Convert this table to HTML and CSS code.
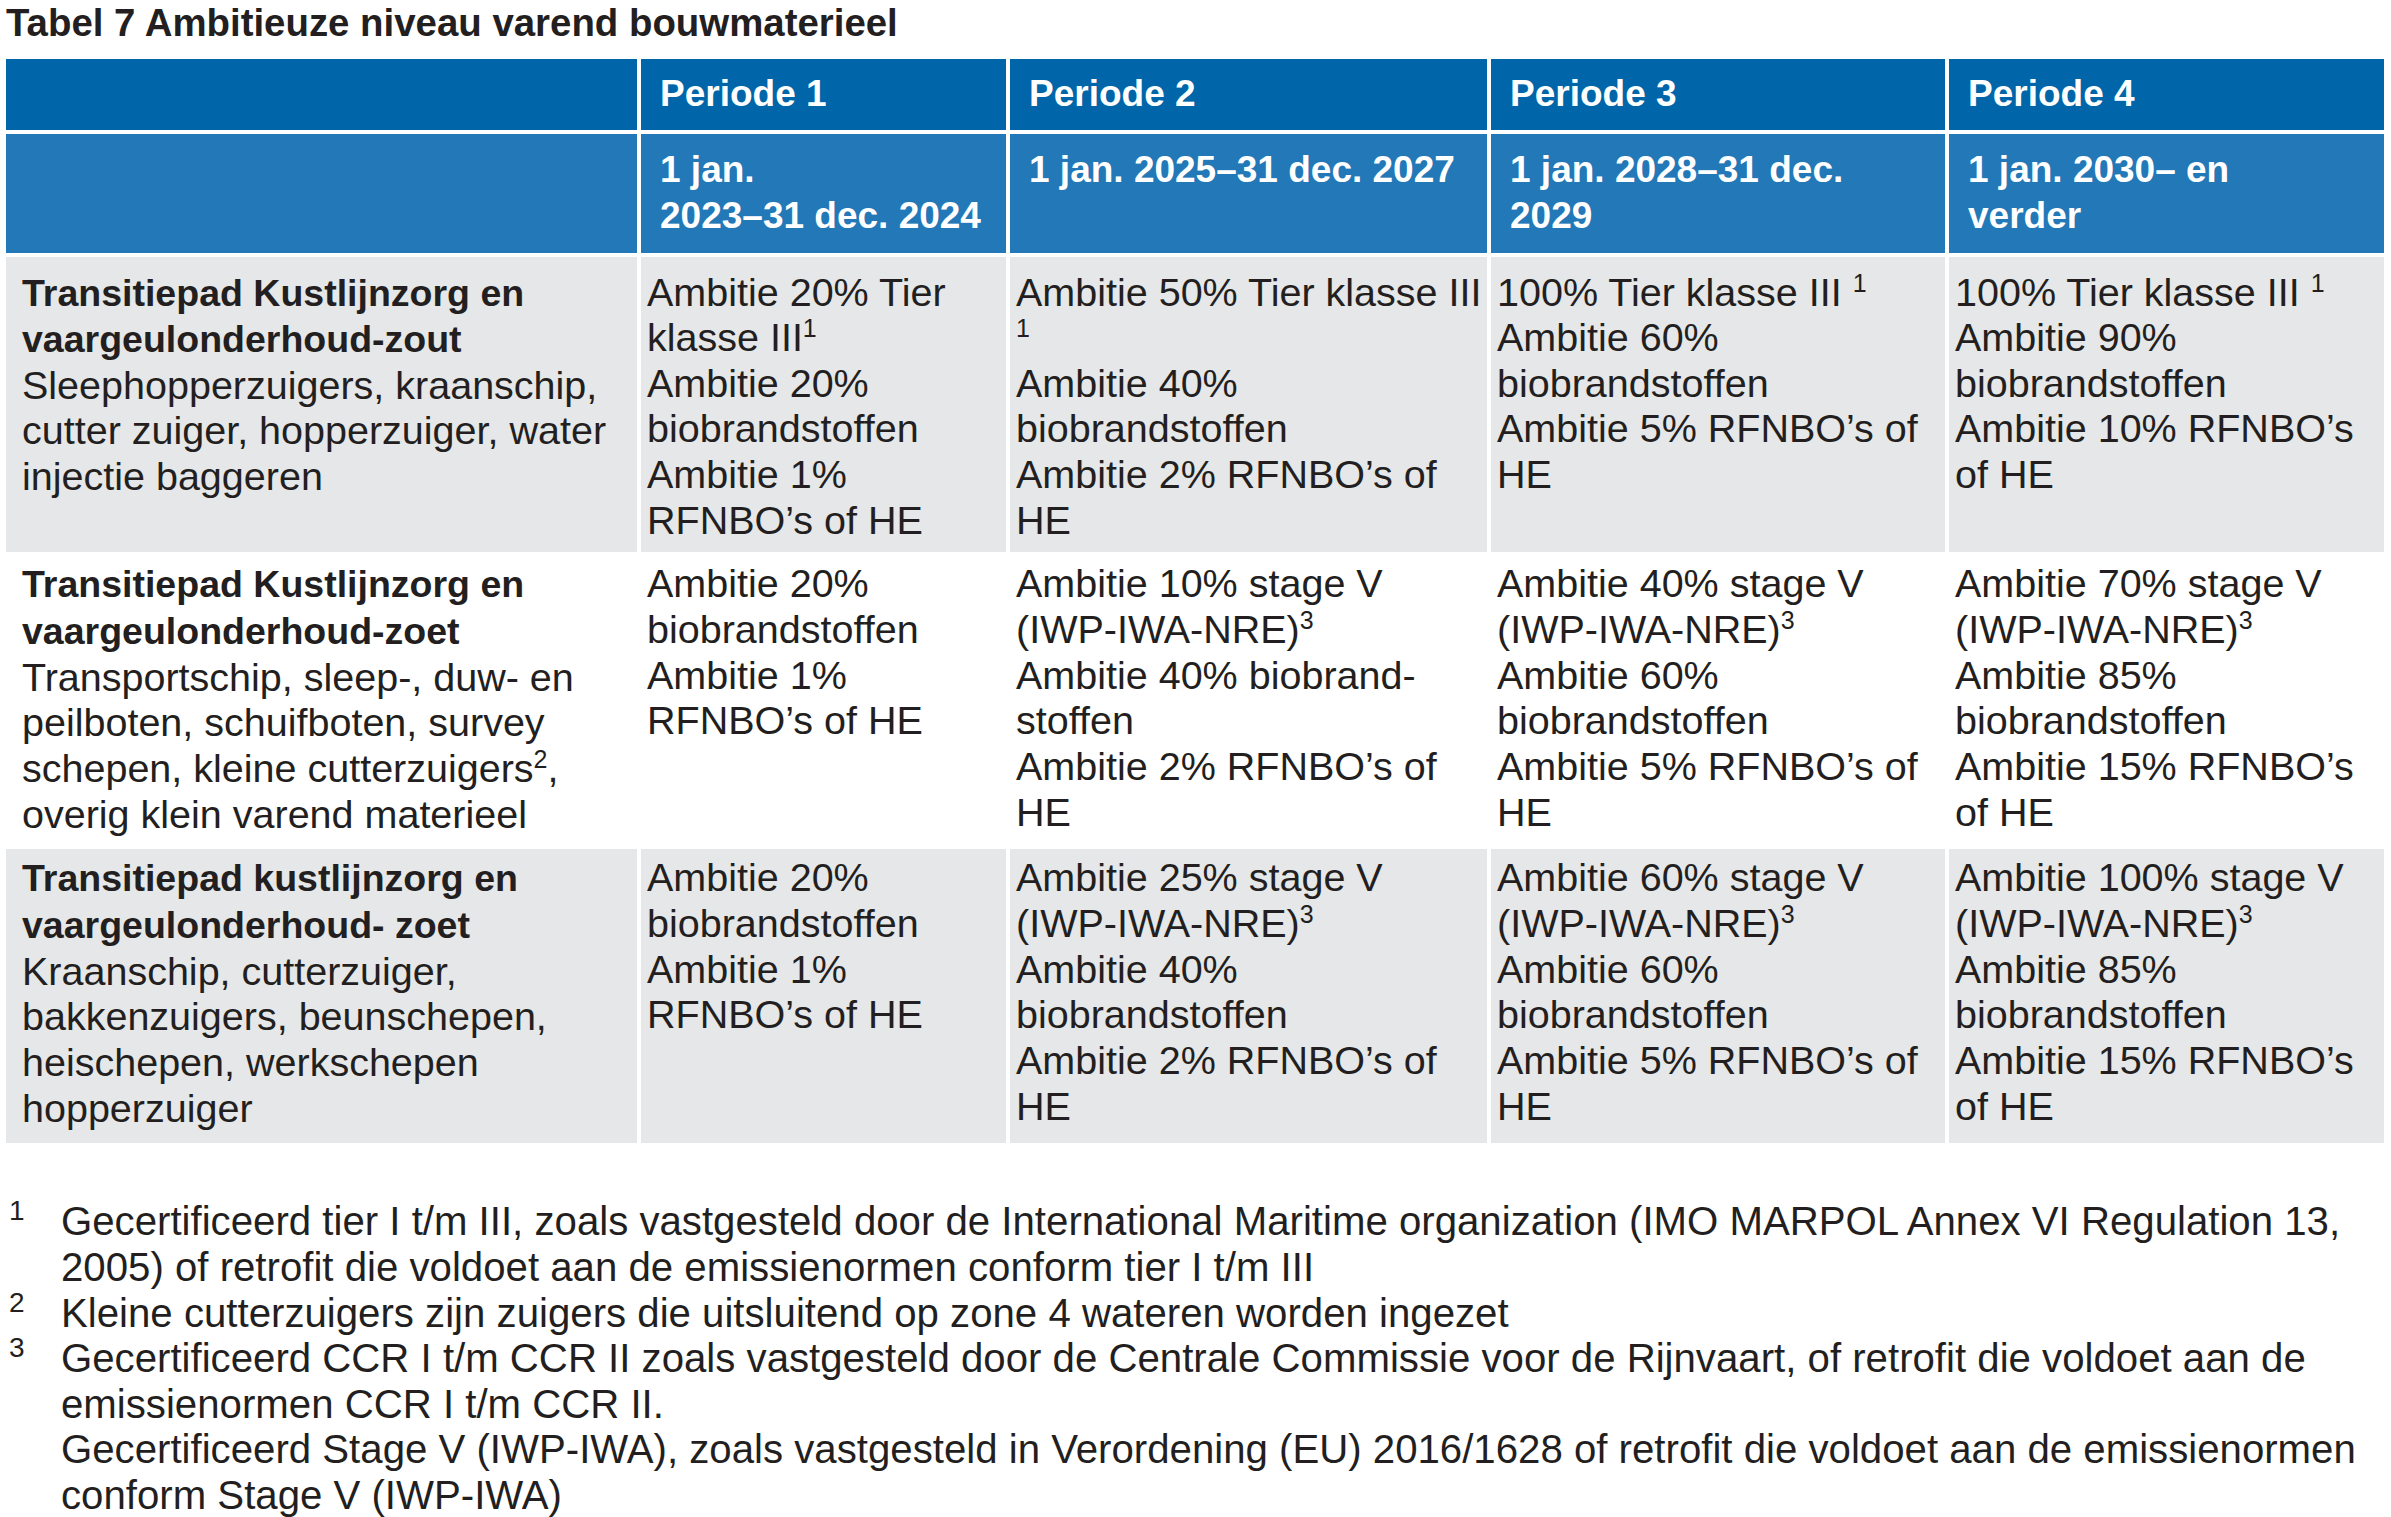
FILE: index.html
```html
<!DOCTYPE html>
<html lang="nl">
<head>
<meta charset="utf-8">
<title>Tabel 7 Ambitieuze niveau varend bouwmaterieel</title>
<link rel="stylesheet" href="styles.css">
</head>
<body>
<div class="title">Tabel 7 Ambitieuze niveau varend bouwmaterieel</div>
<table class="tbl">
  <colgroup>
    <col class="c1"><col class="c2"><col class="c3"><col class="c4"><col class="c5">
  </colgroup>
  <thead>
    <tr class="h1">
      <th></th>
      <th>Periode 1</th>
      <th>Periode 2</th>
      <th>Periode 3</th>
      <th>Periode 4</th>
    </tr>
    <tr class="h2">
      <th></th>
      <th>1 jan.<br>2023–31 dec. 2024</th>
      <th>1 jan. 2025–31 dec. 2027</th>
      <th>1 jan. 2028–31 dec.<br>2029</th>
      <th>1 jan. 2030– en<br>verder</th>
    </tr>
  </thead>
  <tbody>
    <tr class="r1 grey">
      <td class="lead"><b>Transitiepad Kustlijnzorg en<br>vaargeulonderhoud-zout</b><br>Sleephopperzuigers, kraanschip,<br>cutter zuiger, hopperzuiger, water<br>injectie baggeren</td>
      <td>Ambitie 20% Tier<br>klasse III<sup>1</sup><br>Ambitie 20%<br>biobrandstoffen<br>Ambitie 1%<br>RFNBO’s of HE</td>
      <td>Ambitie 50% Tier klasse III<br><sup>1</sup><br>Ambitie 40%<br>biobrandstoffen<br>Ambitie 2% RFNBO’s of<br>HE</td>
      <td>100% Tier klasse III <sup>1</sup><br>Ambitie 60%<br>biobrandstoffen<br>Ambitie 5% RFNBO’s of<br>HE</td>
      <td>100% Tier klasse III <sup>1</sup><br>Ambitie 90%<br>biobrandstoffen<br>Ambitie 10% RFNBO’s<br>of HE</td>
    </tr>
    <tr class="r2 white">
      <td class="lead"><b>Transitiepad Kustlijnzorg en<br>vaargeulonderhoud-zoet</b><br>Transportschip, sleep-, duw- en<br>peilboten, schuifboten, survey<br>schepen, kleine cutterzuigers<sup>2</sup>,<br>overig klein varend materieel</td>
      <td>Ambitie 20%<br>biobrandstoffen<br>Ambitie 1%<br>RFNBO’s of HE</td>
      <td>Ambitie 10% stage V<br>(IWP-IWA-NRE)<sup>3</sup><br>Ambitie 40% biobrand-<br>stoffen<br>Ambitie 2% RFNBO’s of<br>HE</td>
      <td>Ambitie 40% stage V<br>(IWP-IWA-NRE)<sup>3</sup><br>Ambitie 60%<br>biobrandstoffen<br>Ambitie 5% RFNBO’s of<br>HE</td>
      <td>Ambitie 70% stage V<br>(IWP-IWA-NRE)<sup>3</sup><br>Ambitie 85%<br>biobrandstoffen<br>Ambitie 15% RFNBO’s<br>of HE</td>
    </tr>
    <tr class="r3 grey">
      <td class="lead"><b>Transitiepad kustlijnzorg en<br>vaargeulonderhoud- zoet</b><br>Kraanschip, cutterzuiger,<br>bakkenzuigers, beunschepen,<br>heischepen, werkschepen<br>hopperzuiger</td>
      <td>Ambitie 20%<br>biobrandstoffen<br>Ambitie 1%<br>RFNBO’s of HE</td>
      <td>Ambitie 25% stage V<br>(IWP-IWA-NRE)<sup>3</sup><br>Ambitie 40%<br>biobrandstoffen<br>Ambitie 2% RFNBO’s of<br>HE</td>
      <td>Ambitie 60% stage V<br>(IWP-IWA-NRE)<sup>3</sup><br>Ambitie 60%<br>biobrandstoffen<br>Ambitie 5% RFNBO’s of<br>HE</td>
      <td>Ambitie 100% stage V<br>(IWP-IWA-NRE)<sup>3</sup><br>Ambitie 85%<br>biobrandstoffen<br>Ambitie 15% RFNBO’s<br>of HE</td>
    </tr>
  </tbody>
</table>
<div class="notes">
  <div class="note">
    <div class="num"><span>1</span></div>
    <div class="txt">Gecertificeerd tier I t/m III, zoals vastgesteld door de International Maritime organization (IMO MARPOL Annex VI Regulation 13,<br>2005) of retrofit die voldoet aan de emissienormen conform tier I t/m III</div>
  </div>
  <div class="note">
    <div class="num"><span>2</span></div>
    <div class="txt">Kleine cutterzuigers zijn zuigers die uitsluitend op zone 4 wateren worden ingezet</div>
  </div>
  <div class="note">
    <div class="num"><span>3</span></div>
    <div class="txt">Gecertificeerd CCR I t/m CCR II zoals vastgesteld door de Centrale Commissie voor de Rijnvaart, of retrofit die voldoet aan de<br>emissienormen CCR I t/m CCR II.<br>Gecertificeerd Stage V (IWP-IWA), zoals vastgesteld in Verordening (EU) 2016/1628 of retrofit die voldoet aan de emissienormen<br>conform Stage V (IWP-IWA)</div>
  </div>
</div>
</body>
</html>
```

FILE: styles.css
```css
html, body {
  margin: 0;
  padding: 0;
  background: #ffffff;
}

body {
  font-family: "Liberation Sans", Arial, sans-serif;
  color: #231f20;
}

.title {
  font-weight: bold;
  font-size: 38.4px;
  line-height: 46px;
  height: 46px;
  padding-left: 6px;
  white-space: nowrap;
}

.tbl {
  table-layout: fixed;
  border-collapse: separate;
  border-spacing: 4px;
  margin-top: 9px;
  margin-left: 2px;
  width: 2386px;
}

.c1 { width: 631px; }
.c2 { width: 365px; }
.c3 { width: 477px; }
.c4 { width: 454px; }
.c5 { width: 435px; }

.tbl th,
.tbl td {
  vertical-align: top;
  text-align: left;
  white-space: nowrap;
  overflow: visible;
}

.tbl th {
  color: #ffffff;
  font-weight: bold;
  font-size: 37px;
  line-height: 46px;
  padding-left: 19px;
  padding-right: 4px;
}

.h1 th {
  background: #0066a9;
  padding-top: 12px;
  padding-bottom: 13px;
}

.h2 th {
  background: #2378b7;
  padding-top: 13px;
  padding-bottom: 14px;
}

.tbl td {
  font-size: 39.5px;
  line-height: 45.65px;
  padding-left: 6px;
  padding-right: 2px;
}

.tbl td.lead {
  padding-left: 16px;
}

.tbl td b {
  font-size: 37.5px;
}

.grey td {
  background: #e6e7e8;
}

.white td {
  background: #ffffff;
}

.r1 td {
  padding-top: 12.5px;
  padding-bottom: 8.4px;
}

.r2 td {
  padding-top: 5.5px;
  padding-bottom: 7.5px;
}

.r3 td {
  padding-top: 6.5px;
  padding-bottom: 12px;
}

.tbl sup {
  font-size: 25px;
  line-height: 0;
  vertical-align: 14px;
}

.notes {
  margin-top: 52px;
  font-size: 40.2px;
  line-height: 45.65px;
}

.note {
  display: grid;
  grid-template-columns: 61px 1fr;
}

.num {
  padding-left: 9px;
}

.num span {
  font-size: 28px;
  line-height: 0;
  vertical-align: 15px;
}

.txt {
  white-space: nowrap;
}
```
